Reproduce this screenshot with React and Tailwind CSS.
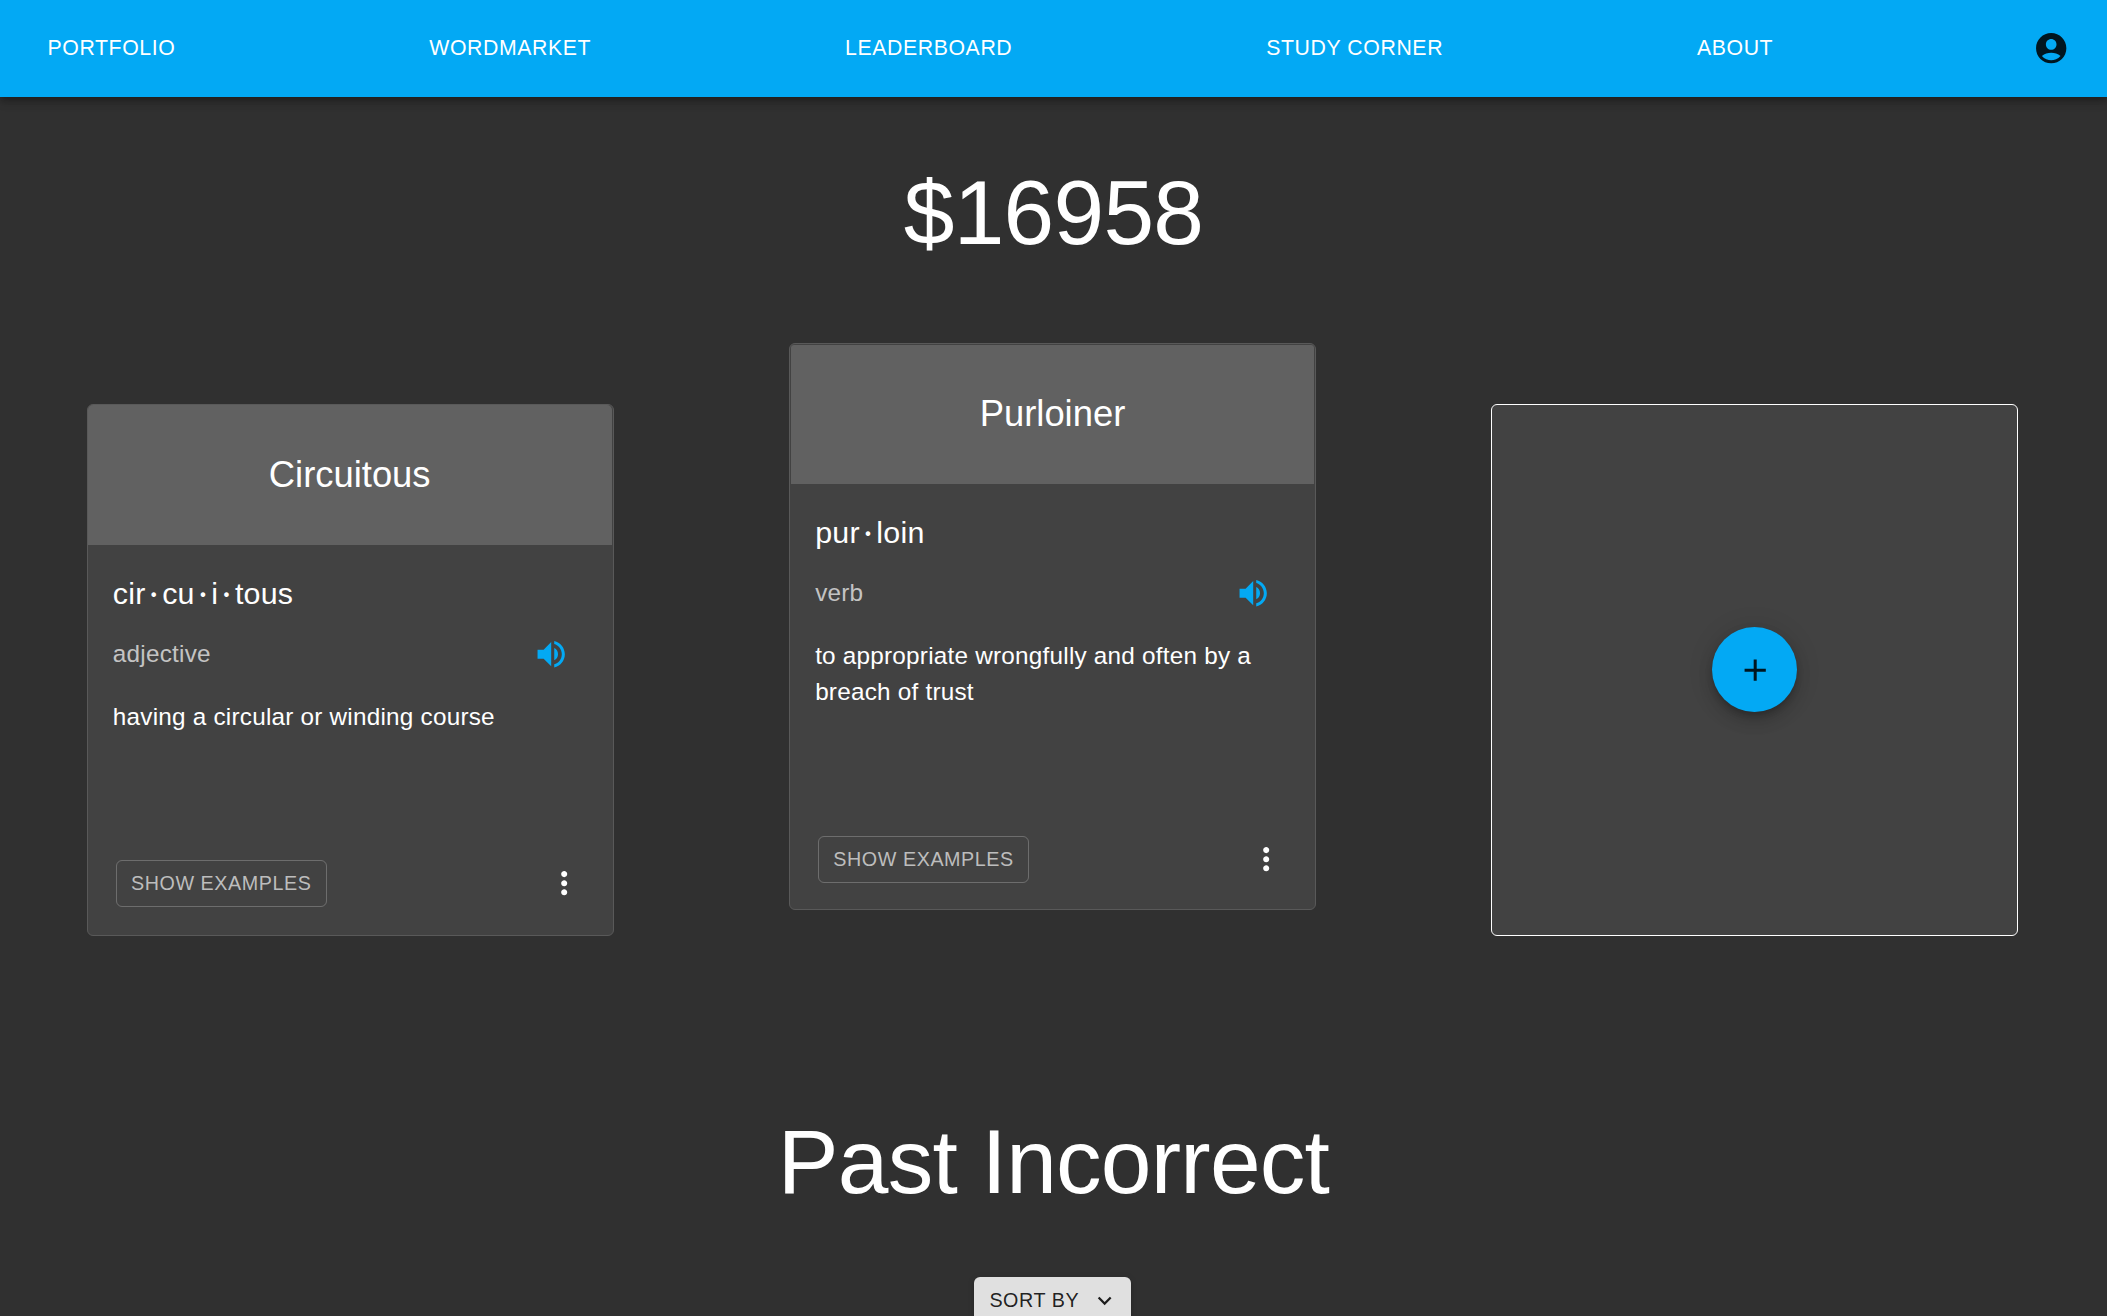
import React from "react";
import { MdAccountCircle, MdVolumeUp, MdMoreVert, MdAdd, MdExpandMore } from "react-icons/md";

const NAV = ["Portfolio", "Wordmarket", "Leaderboard", "Study Corner", "About"];

function NavBar() {
  return (
    <header className="relative flex h-[97px] items-center justify-between bg-[#03a9f4] pl-[35.4px] pr-[19.2px] shadow-[0_3px_6px_-1.5px_rgba(0,0,0,0.2),0_6px_7.6px_rgba(0,0,0,0.14),0_1.5px_15px_rgba(0,0,0,0.12)]">
      {NAV.map((label) => (
        <button key={label} className="px-[12.1px] text-[21.25px] leading-[37.2px] tracking-[0.02857em] uppercase text-white">
          {label}
        </button>
      ))}
      <button className="p-[18.2px] text-[36.4px] text-black/87">
        <MdAccountCircle />
      </button>
    </header>
  );
}

function Syllables({ parts }) {
  return (
    <h3 className="h-[48.6px] text-[30.4px] leading-[48.6px] tracking-[0.0075em]">
      {parts.map((part, i) => (
        <React.Fragment key={i}>
          {i > 0 && <span className="inline-block w-[16.6px] text-center font-['Lato',sans-serif] leading-none">·</span>}
          {part}
        </React.Fragment>
      ))}
    </h3>
  );
}

function WordCard({ title, parts, kind, definition, className, headerClass, footerClass }) {
  return (
    <article className={"flex w-3/4 flex-col rounded-[6px] border border-[#595959] bg-[#424242] text-white " + className}>
      <div className={"flex shrink-0 items-center justify-center bg-[#616161] " + headerClass}>
        <h2 className="text-[36.4px] leading-[48.6px]">{title}</h2>
      </div>
      <div className="grow pl-[25px] pr-[25.3px] pt-[24.1px]">
        <Syllables parts={parts} />
        <div className="flex h-[73.5px] items-center justify-between">
          <span className="text-[24.3px] leading-[36.4px] tracking-[0.00938em] text-white/70">{kind}</span>
          <button className="p-[18.2px] text-[36.4px] text-[#03a9f4]">
            <MdVolumeUp />
          </button>
        </div>
        <p className="mt-[8.2px] text-[24.3px] leading-[36.4px] tracking-[0.00938em]">{definition}</p>
      </div>
      <div className={"flex h-[72.9px] shrink-0 items-center justify-between pl-[28px] pr-[12.4px] " + footerClass}>
        <button className="h-[46.7px] rounded-[6px] border border-white/23 px-[14.2px] text-[19.73px] leading-[34.5px] tracking-[0.02857em] uppercase text-[#bdbdbd]">
          Show Examples
        </button>
        <button className="p-[18.2px] text-[36.4px]">
          <MdMoreVert />
        </button>
      </div>
    </article>
  );
}

export default function App() {
  return (
    <div className="h-[1316px] overflow-hidden bg-[#303030] font-['Liberation_Sans',Arial,sans-serif] text-white">
      <NavBar />
      <h1 className="mt-[61px] text-center text-[91.1px] leading-[109px] tracking-[-0.00833em]">$16958</h1>
      <main className="mt-[76px] -ml-px mr-px grid h-[593px] grid-cols-3 items-start justify-items-center">
        <WordCard
          className="mt-[61px] h-[532px]"
          headerClass="mr-px h-[139.6px] rounded-t-[5px]"
          footerClass="mb-[15px]"
          title="Circuitous"
          parts={["cir", "cu", "i", "tous"]}
          kind="adjective"
          definition="having a circular or winding course"
        />
        <WordCard
          className="h-[567px]"
          headerClass="mx-px mt-px h-[138.6px] rounded-t-[3px]"
          footerClass="mb-[13px]"
          title="Purloiner"
          parts={["pur", "loin"]}
          kind="verb"
          definition="to appropriate wrongfully and often by a breach of trust"
        />
        <div className="mt-[61px] flex h-[532px] w-3/4 items-center justify-center rounded-[6px] border border-white bg-[#424242] pb-px">
          <button className="flex size-[85px] items-center justify-center rounded-full bg-[#03a9f4] pt-px text-[36.4px] text-black/87 shadow-[0_4.5px_7.5px_-1.5px_rgba(0,0,0,0.2),0_9px_15px_rgba(0,0,0,0.14),0_1.5px_27px_rgba(0,0,0,0.12)]">
            <MdAdd />
          </button>
        </div>
      </main>
      <h1 className="mt-[171px] text-center text-[91.1px] leading-[109px] tracking-[-0.00833em]">Past Incorrect</h1>
      <div className="mt-[61px] flex justify-center pr-[2px]">
        <button className="flex h-[46.7px] items-center rounded-[6px] bg-[#e0e0e0] pl-[15.2px] pr-[12.2px] text-[19.73px] leading-[34.5px] tracking-[0.02857em] uppercase text-black/87 shadow-[0_4.5px_1.5px_-3px_rgba(0,0,0,0.2),0_3px_3px_rgba(0,0,0,0.14),0_1.5px_7.5px_rgba(0,0,0,0.12)]">
          Sort By
          <MdExpandMore className="ml-[12.1px] text-[27.3px]" />
        </button>
      </div>
    </div>
  );
}
